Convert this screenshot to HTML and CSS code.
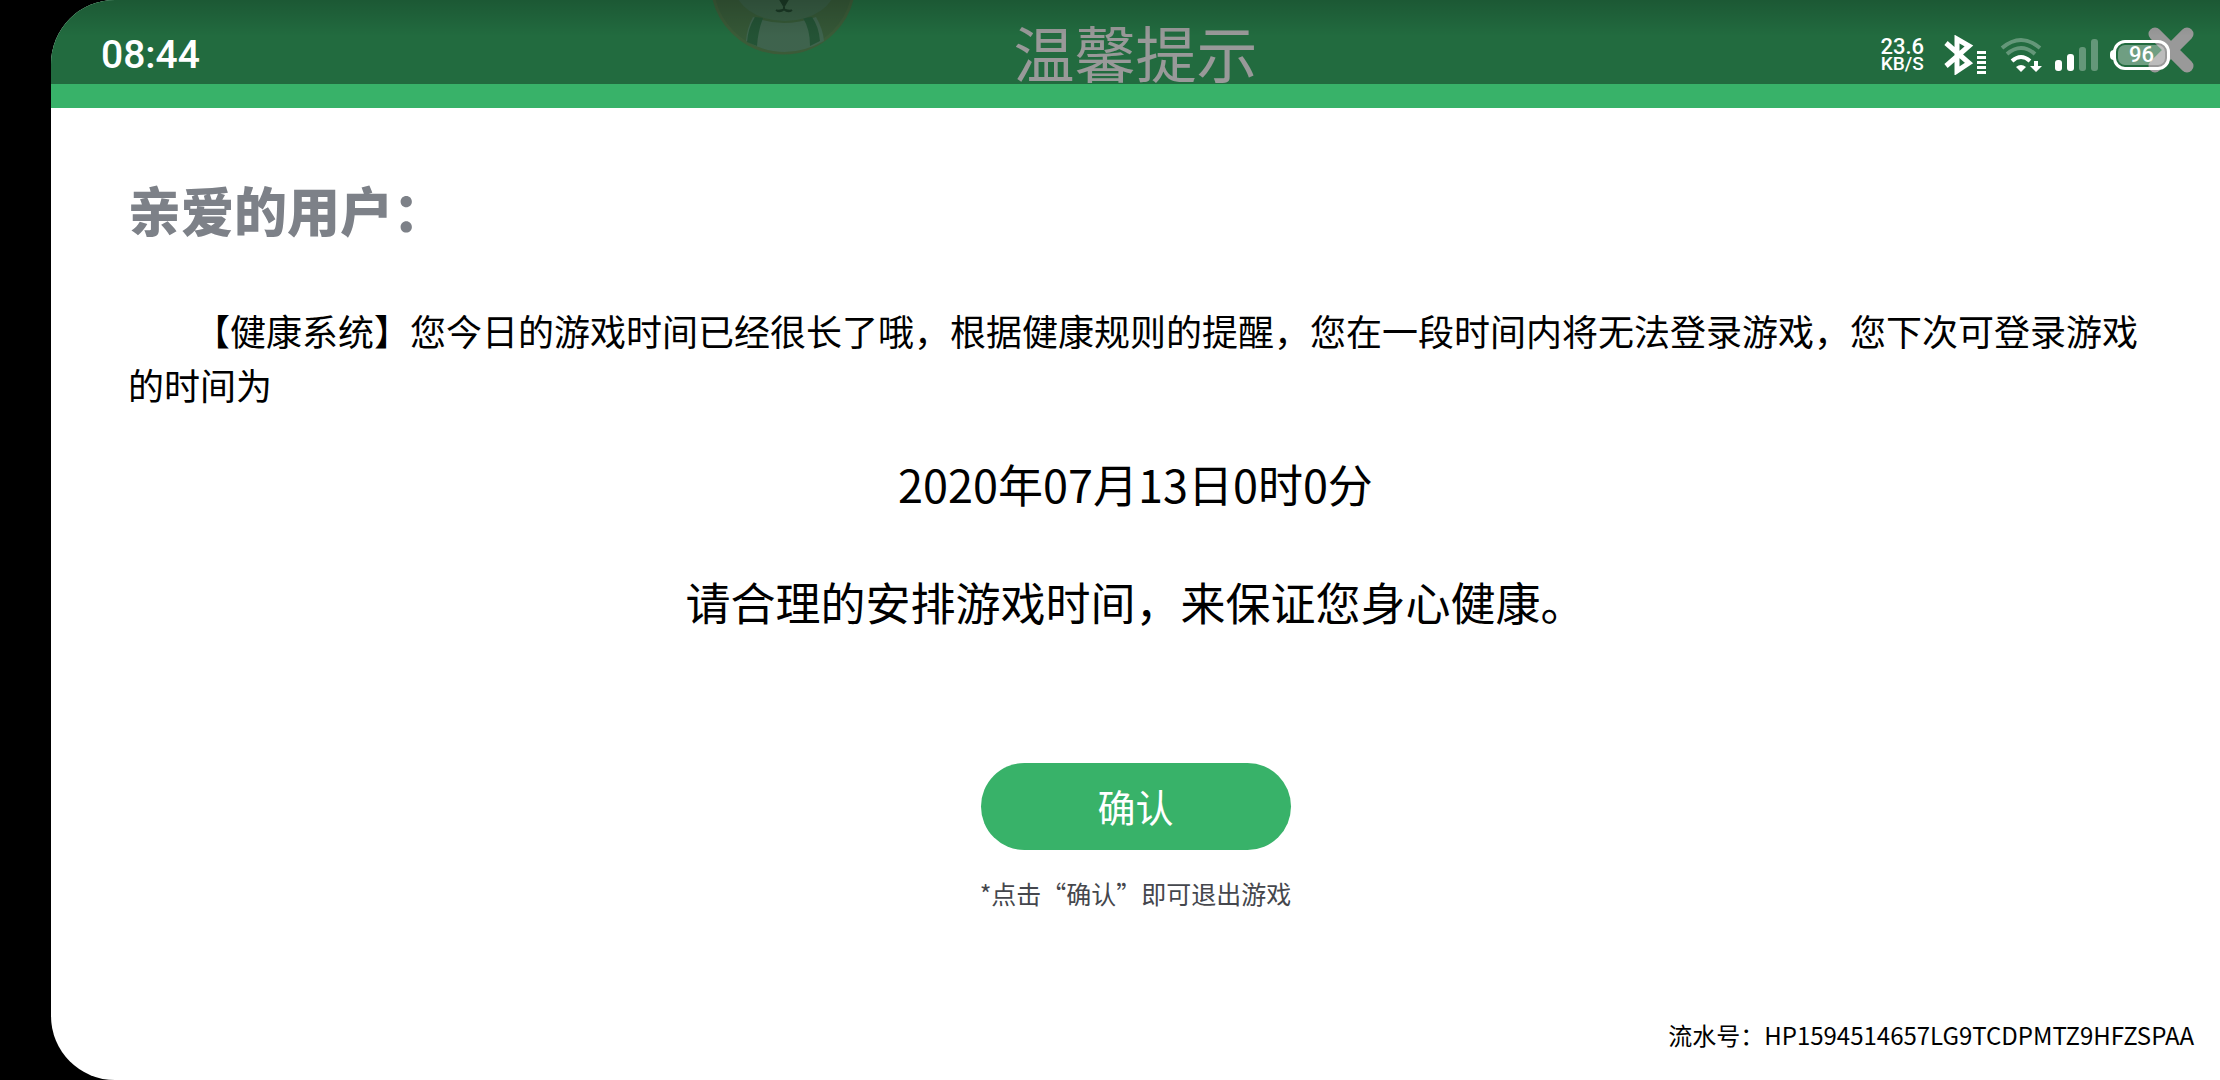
FILE: index.html
```html
<!DOCTYPE html>
<html lang="zh-CN">
<head>
  <meta charset="UTF-8" />
  <meta name="viewport" content="width=device-width, initial-scale=1.0" />
  <title>温馨提示</title>
  <link rel="stylesheet" href="styles.css">
</head>
<body>
<div class="screen">
  <header class="app-header">
    <svg class="mascot" width="146" height="146" viewBox="0 0 146 146" aria-hidden="true">
      <circle cx="73" cy="73" r="71" fill="#58925b" stroke="#62985d" stroke-width="3" />
      <path d="M43 108 Q73 120 106 108 Q113 120 114 132 Q74 154 36 132 Q37 119 43 108Z" fill="#68a580" />
      <path d="M45 108 L53 109 Q48 122 47 137 L37 133 Q38 119 45 108Z M93 109 L102 108 Q109 118 110 132 L100 137 Q100 120 93 109Z" fill="#3b8a58" />
      <ellipse cx="75" cy="76" rx="51" ry="36" fill="#5c9a70" />
      <path d="M71 92 h6 l-3 5z M74 96 v4 M74 100 q-4 4 -8 1 M74 100 q4 4 8 1" fill="#2c5f3e" stroke="#2c5f3e" stroke-width="2" fill-rule="evenodd" />
    </svg>
    <h1>温馨提示</h1>
    <button class="close" type="button" aria-label="关闭">
      <svg width="46" height="46" viewBox="0 0 46 46"><path d="M7 7 L39 39 M39 7 L7 39" stroke="#fff" stroke-width="13" stroke-linecap="round" /></svg>
    </button>
  </header>

  <div class="status-bar">
    <time>08:44</time>
    <div class="status-icons">
      <div class="speed"><span>23.6</span><span class="unit">KB/S</span></div>
      <svg class="bluetooth" width="42" height="40" viewBox="0 0 42 40" fill="none" stroke="#fff">
        <path d="M2 8 L25 28 L13 36 V4 L25 11 L2 31" stroke-width="5" />
        <path d="M33 17.5h9M33 22.5h9M33 27.5h9M33 32.500h9M33 37.500h9" stroke-width="3" />
      </svg>
      <svg class="wifi" width="42" height="36" viewBox="0 0 42 36" fill="none" stroke="#fff">
        <path d="M2 11 Q21 -5 40 11" stroke-width="4" opacity=".3" />
        <path d="M7 17 Q21 5 35 17" stroke-width="4" opacity=".3" />
        <path d="M12 24 Q21 16 30 24" stroke-width="4" />
        <path d="M16 30 Q21 26 26 30 L21 35Z" fill="#fff" stroke="none" />
        <path d="M34 24h4v5h4l-6 6l-6-6h4z" fill="#fff" stroke="none" />
      </svg>
      <svg class="signal" width="44" height="34" viewBox="0 0 44 34" fill="#fff">
        <rect x="0" y="22" width="7" height="11" rx="3" />
        <rect x="12" y="16" width="7" height="17" rx="3" />
        <rect x="24" y="9" width="7" height="24" rx="3" opacity=".3" />
        <rect x="36" y="1" width="7" height="32" rx="3" opacity=".3" />
      </svg>
      <div class="battery"><span>96</span></div>
    </div>
  </div>

  <main>
    <h2>亲爱的用户：</h2>
    <p class="message">【健康系统】您今日的游戏时间已经很长了哦，根据健康规则的提醒，您在一段时间内将无法登录游戏，您下次可登录游戏的时间为</p>
    <p class="notice">2020年07月13日0时0分</p>
    <p class="notice">请合理的安排游戏时间，来保证您身心健康。</p>
    <button class="confirm" type="button">确认</button>
    <p class="hint">*点击“确认”即可退出游戏</p>
  </main>

  <footer>流水号：HP1594514657LG9TCDPMTZ9HFZSPAA</footer>
</div>
</body>
</html>
```
FILE: styles.css
```css
* { margin: 0; padding: 0; box-sizing: border-box; }
body {
  min-height: 100vh;
  display: flex;
  padding-left: 51px;
  background: #000;
  color: #000;
  font-family: "Noto Sans CJK SC", sans-serif;
}
button { border: 0; font: inherit; cursor: pointer; }
svg { display: block; }

/* Screen with rounded left corners, the camera strip stays black */
.screen {
  position: relative;
  flex: 1;
  display: flex;
  flex-direction: column;
  background: #fff;
  border-radius: 64px 0 0 64px;
  overflow: hidden;
}

/* Header */
.app-header {
  position: relative;
  display: grid;
  grid-template-columns: 1fr auto 1fr;
  align-items: center;
  height: 108px;
  padding: 0 26px;
  background: #38b269;
}
.app-header h1 {
  grid-column: 2;
  color: #fff;
  font-size: 61px;
  font-weight: 400;
  line-height: 104px;
  margin-bottom: 4px;
}
.mascot { position: absolute; left: 33%; top: -91px; margin-left: -57px; }
.close { justify-self: end; margin-bottom: 8px; background: none; }

/* System status bar, drawn over the header */
.status-bar {
  position: absolute;
  top: 0; left: 0; right: 0;
  display: flex;
  justify-content: space-between;
  align-items: center;
  height: 84px;
  padding: 25px 50px 0 50px;
  background: linear-gradient(to bottom, rgba(0,0,0,.5) 0, rgba(0,0,0,.4) 36px);
  color: #fff;
  font-family: Roboto, sans-serif;
  font-weight: 500;
  pointer-events: none;
}
.status-bar time { font-size: 39px; }
.status-icons { display: flex; align-items: center; }
.speed { display: grid; font-size: 22px; line-height: 17px; text-align: center; }
.speed .unit { font-size: 19px; }
.bluetooth { margin-left: 20px; }
.wifi { margin-left: 14px; }
.signal { margin-left: 13px; }
.battery {
  position: relative;
  display: grid;
  width: 57px;
  height: 30px;
  margin-left: 14px;
  padding: 2px;
  border: 3px solid #fff;
  border-radius: 12px;
  font-size: 22px;
  line-height: 20px;
  text-align: center;
}
.battery span { background: rgba(255,255,255,.35); border-radius: 7px; }
.battery::before {
  content: "";
  position: absolute;
  left: -6px; top: 7px;
  width: 4px; height: 10px;
  background: #fff;
  border-radius: 4px 0 0 4px;
}

/* Content */
main {
  display: flex;
  flex-direction: column;
  align-items: center;
  padding: 61px 77px 0;
}
h2 {
  align-self: flex-start;
  color: #7d8188;
  font-size: 53px;
  font-weight: 900;
  line-height: 80px;
}
.message {
  align-self: stretch;
  margin-top: 54px;
  margin-bottom: 40px;
  font-size: 36px;
  line-height: 54px;
  text-indent: 66px;
}
.notice {
  margin-bottom: 52px;
  font-size: 45px;
  line-height: 66px;
}
.confirm {
  width: 310px;
  height: 87px;
  margin-top: 76px;
  padding-bottom: 3px;
  background: #38b269;
  border-radius: 44px;
  color: #fff;
  font-size: 38px;
}
.hint {
  margin-top: 24px;
  color: #45474d;
  font-size: 25px;
  line-height: 38px;
}
footer {
  margin-top: auto;
  padding: 24px 26px;
  font-size: 24px;
  line-height: 42px;
  text-align: right;
}
@media (max-width: 1200px) {
  main { padding: 40px 32px 0; }
  .message { text-indent: 2em; }
}
```
